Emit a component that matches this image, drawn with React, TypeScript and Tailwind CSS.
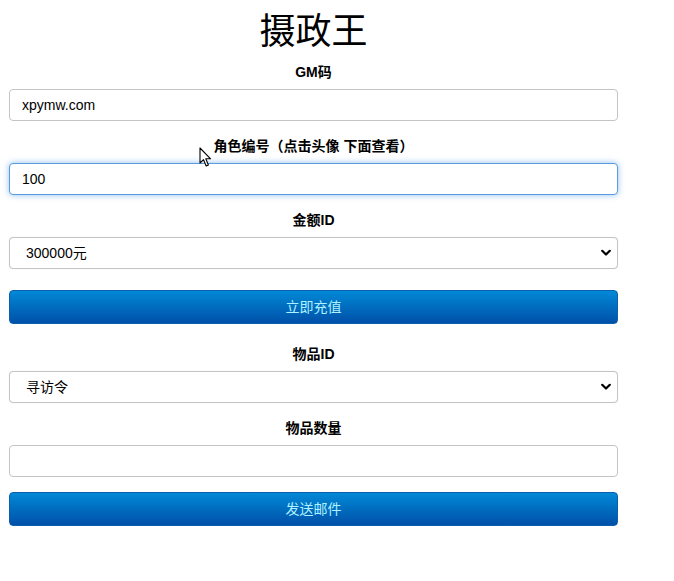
import React from "react";

const font = { fontFamily: '"Liberation Sans", "Noto Sans CJK SC", Arial, sans-serif' };

function Label({ children }: { children: React.ReactNode }) {
  return (
    <div className="text-center text-[14px] font-bold leading-[18px] text-black">{children}</div>
  );
}

function Chevron() {
  return (
    <svg
      className="pointer-events-none absolute right-[7px] top-1/2 -translate-y-1/2"
      width="10"
      height="7"
      viewBox="0 0 10 7"
    >
      <path d="M1.2 1.2 L5 5 L8.8 1.2" fill="none" stroke="#000" strokeWidth="2.2" strokeLinecap="round" strokeLinejoin="round" />
    </svg>
  );
}

function SelectBox({ value }: { value: string }) {
  return (
    <div className="relative mt-[8px]">
      <select
        defaultValue={value}
        className="block h-[32px] w-full appearance-none rounded-[4px] border border-[#c4c4c4] bg-white pl-[16px] text-[14px] text-black outline-none shadow-[0_0_1px_#ddd]"
        style={font}
      >
        <option>{value}</option>
      </select>
      <Chevron />
    </div>
  );
}

function Button({ children }: { children: React.ReactNode }) {
  return (
    <button
      className="block h-[34px] w-full rounded-[4px] border border-[#0a5fae] bg-[linear-gradient(to_bottom,#0289d6,#0050a8)] text-[14px] text-[#aef2ff]"
      style={font}
    >
      {children}
    </button>
  );
}

export default function App() {
  return (
    <div className="relative min-h-[581px] w-full bg-white" style={font}>
      <div className="ml-[9px] w-[609px] pt-[10px]">
        <h1 className="text-center text-[36px] font-normal leading-[44px] text-black">摄政王</h1>

        <div className="mt-[9px]">
          <Label>GM码</Label>
          <input
            defaultValue="xpymw.com"
            className="mt-[8px] block h-[32px] w-full rounded-[4px] border border-[#c4c4c4] bg-white px-[12px] text-[14px] text-black outline-none"
            style={font}
          />
        </div>

        <div className="mt-[16px]">
          <Label>角色编号（点击头像 下面查看）</Label>
          <input
            defaultValue="100"
            className="mt-[8px] block h-[32px] w-full rounded-[4px] border border-[#5a9be0] bg-white px-[12px] text-[14px] text-black outline-none shadow-[0_0_6px_rgba(70,150,230,0.6)]"
            style={font}
          />
        </div>

        <div className="mt-[16px]">
          <Label>金额ID</Label>
          <SelectBox value="300000元" />
        </div>

        <div className="mt-[21px]">
          <Button>立即充值</Button>
        </div>

        <div className="mt-[21px]">
          <Label>物品ID</Label>
          <SelectBox value="寻访令" />
        </div>

        <div className="mt-[16px]">
          <Label>物品数量</Label>
          <input
            className="mt-[8px] block h-[32px] w-full rounded-[4px] border border-[#c4c4c4] bg-white px-[12px] text-[14px] text-black outline-none"
            style={font}
          />
        </div>

        <div className="mt-[15px]">
          <Button>发送邮件</Button>
        </div>
      </div>

      <svg className="pointer-events-none absolute left-[199px] top-[147px]" width="13" height="21" viewBox="0 0 13 21">
        <path
          d="M1 1 L1 16 L4.5 12.6 L7.2 19 L9.4 18 L6.8 11.8 L11.6 11.8 Z"
          fill="#fff"
          stroke="#000"
          strokeWidth="1.1"
          strokeLinejoin="round"
        />
      </svg>
    </div>
  );
}
